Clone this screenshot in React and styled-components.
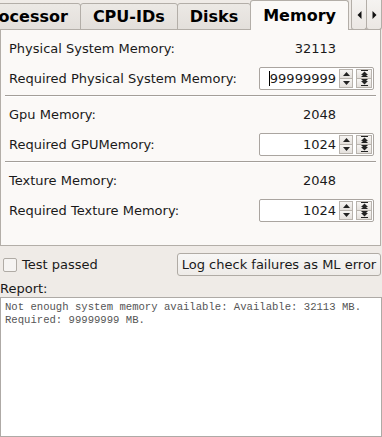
import React from "react";
import styled, { createGlobalStyle } from "styled-components";

const GlobalStyle = createGlobalStyle`
  html, body {
    margin: 0;
    padding: 0;
    background: #efebe7;
  }
  body {
    font-family: "DejaVu Sans", "Liberation Sans", sans-serif;
    font-size: 13px;
    color: #1a1a1a;
  }
`;

const Window = styled.div`
  width: 382px;
  height: 437px;
  display: flex;
  flex-direction: column;
  overflow: hidden;
  background: #efebe7;
`;

const TabBar = styled.div`
  display: flex;
  height: 30px;
  position: relative;
  z-index: 1;
`;

const TabStrip = styled.div`
  flex: 1;
  overflow: hidden;
  display: flex;
`;

const TabList = styled.div`
  display: flex;
  align-items: flex-start;
  margin-left: ${(p) => p.offset}px;
`;

const Tab = styled.div`
  flex: none;
  box-sizing: border-box;
  height: ${(p) => (p.active ? 30 : 27)}px;
  margin-top: ${(p) => (p.active ? 0 : 3)}px;
  margin-left: -1px;
  padding: 0 12px;
  display: flex;
  align-items: center;
  justify-content: center;
  font-size: 16px;
  font-weight: bold;
  color: #000;
  border: 1px solid #b3aea8;
  border-bottom: ${(p) => (p.active ? "none" : "1px solid #b3aea8")};
  border-radius: 3px 3px 0 0;
  background: ${(p) =>
    p.active ? "#fbf9f7" : "linear-gradient(#ece9e5, #e3dfdb)"};
  position: relative;
  z-index: ${(p) => (p.active ? 2 : 1)};
  white-space: nowrap;
`;

const ScrollButtons = styled.div`
  display: flex;
  flex: none;
`;

const ScrollButton = styled.div`
  box-sizing: border-box;
  width: 16px;
  height: 30px;
  display: flex;
  align-items: center;
  justify-content: center;
  border: 1px solid #b3aea8;
  border-top: none;
  border-radius: 0 0 3px 3px;
  background: linear-gradient(#f5f3f1, #ebe7e3);
  margin-left: ${(p) => (p.first ? 0 : -1)}px;
`;

const Pane = styled.div`
  box-sizing: border-box;
  width: 381px;
  margin-top: -1px;
  border: 1px solid #b3aea8;
  background: #fbf9f7;
  padding: 6px 4px 23px 4px;
  display: flex;
  flex-direction: column;
`;

const Group = styled.div`
  display: grid;
  grid-template-columns: 1fr 115px;
  grid-auto-rows: 24px;
  row-gap: 6px;
  padding: 0 2px 0 4px;
`;

const Label = styled.div`
  display: flex;
  align-items: center;
  white-space: nowrap;
`;

const Value = styled.div`
  display: flex;
  align-items: center;
  justify-content: flex-end;
  padding-right: 38px;
`;

const Separator = styled.div`
  margin: ${(p) => p.margin};
  border-top: 1px solid #a39e99;
  border-bottom: 1px solid #ffffff;
`;

const SpinBox = styled.div`
  box-sizing: border-box;
  height: 23px;
  align-self: center;
  display: flex;
  align-items: center;
  background: #fff;
  border: 1px solid #aaa5a0;
  border-radius: 2px;
  padding-right: 1px;
`;

const SpinText = styled.div`
  flex: 1;
  display: flex;
  justify-content: flex-end;
  align-items: center;
  padding-right: 3px;
`;

const Cursor = styled.span`
  display: inline-block;
  width: 1px;
  height: 15px;
  background: #000;
`;

const SpinButtons = styled.div`
  display: flex;
  flex-direction: column;
  box-sizing: border-box;
  width: ${(p) => p.w}px;
  height: 19px;
  margin-left: ${(p) => p.gap}px;
  border: 1px solid #b8b3ad;
  background: #f3f1ee;
`;

const SpinHalf = styled.div`
  flex: 1;
  display: flex;
  align-items: center;
  justify-content: center;
  background: linear-gradient(#f7f5f3, #e4e0dc);
  border-top: ${(p) => (p.bottom ? "1px solid #b8b3ad" : "none")};
`;

const BottomRow = styled.div`
  display: flex;
  align-items: center;
  justify-content: space-between;
  height: 23px;
  margin-top: 7px;
`;

const CheckWrap = styled.label`
  display: flex;
  align-items: center;
  padding-left: 3px;
  gap: 5px;
`;

const CheckBox = styled.span`
  box-sizing: border-box;
  width: 14px;
  height: 14px;
  border: 1px solid #b0aba5;
  border-radius: 2px;
  background: #f6f4f2;
`;

const Button = styled.div`
  box-sizing: border-box;
  height: 23px;
  width: 204px;
  margin-right: 1px;
  display: flex;
  align-items: center;
  justify-content: center;
  border: 1px solid #b0aba5;
  border-radius: 3px;
  background: linear-gradient(#f8f7f6, #eeebe8);
  white-space: nowrap;
`;

const ReportLabel = styled.div`
  height: 17px;
  line-height: 17px;
  margin-top: 4px;
`;

const Report = styled.div`
  flex: 1;
  box-sizing: border-box;
  width: 382px;
  border: 1px solid #aeaaa6;
  background: #fff;
  padding: 3px 4px;
  font-family: "Liberation Mono", "DejaVu Sans Mono", monospace;
  font-size: 10.6px;
  line-height: 12.5px;
  color: #555;
  white-space: pre;
`;

const Arrow = ({ dir }) => (
  <svg width="5" height="8" viewBox="0 0 5 8">
    {dir === "left" ? (
      <polygon points="4.5,0 0.5,4 4.5,8" fill="#111" />
    ) : (
      <polygon points="0.5,0 4.5,4 0.5,8" fill="#111" />
    )}
  </svg>
);

const Tri = ({ up, double }) => (
  <svg width="7" height={double ? 7 : 4} viewBox={double ? "0 0 7 7" : "0 0 7 4"}>
    {double ? (
      up ? (
        <g fill="#222">
          <rect x="0" y="0" width="7" height="1" />
          <polygon points="3.5,1.5 0,5 7,5" />
          <polygon points="3.5,3.5 0,7 7,7" />
        </g>
      ) : (
        <g fill="#222">
          <polygon points="0,0 7,0 3.5,3.5" />
          <polygon points="0,2 7,2 3.5,5.5" />
          <rect x="0" y="6" width="7" height="1" />
        </g>
      )
    ) : up ? (
      <polygon points="3.5,0 0,4 7,4" fill="#222" />
    ) : (
      <polygon points="0,0 7,0 3.5,4" fill="#222" />
    )}
  </svg>
);

const Spin = ({ value, focused }) => (
  <SpinBox>
    <SpinText>
      {focused && <Cursor />}
      {value}
    </SpinText>
    <SpinButtons w={14} gap={0}>
      <SpinHalf>
        <Tri up />
      </SpinHalf>
      <SpinHalf bottom>
        <Tri />
      </SpinHalf>
    </SpinButtons>
    <SpinButtons w={16} gap={3}>
      <SpinHalf>
        <Tri up double />
      </SpinHalf>
      <SpinHalf bottom>
        <Tri double />
      </SpinHalf>
    </SpinButtons>
  </SpinBox>
);

const tabs = ["Processor", "CPU-IDs", "Disks", "Memory"];

const groups = [
  { name: "Physical System Memory:", value: "32113", req: "Required Physical System Memory:", reqValue: "99999999", focused: true },
  { name: "Gpu Memory:", value: "2048", req: "Required GPUMemory:", reqValue: "1024" },
  { name: "Texture Memory:", value: "2048", req: "Required Texture Memory:", reqValue: "1024" },
];

export default function App() {
  return (
    <Window>
      <GlobalStyle />
      <TabBar>
        <TabStrip>
          <TabList offset={-33}>
            {tabs.map((t) => (
              <Tab key={t} active={t === "Memory"}>
                {t}
              </Tab>
            ))}
          </TabList>
        </TabStrip>
        <ScrollButtons>
          <ScrollButton first>
            <Arrow dir="left" />
          </ScrollButton>
          <ScrollButton>
            <Arrow dir="right" />
          </ScrollButton>
        </ScrollButtons>
      </TabBar>
      <Pane>
        {groups.map((g, i) => (
          <React.Fragment key={g.name}>
            {i > 0 && <Separator margin="5px 0 5px" />}
            <Group>
              <Label>{g.name}</Label>
              <Value>{g.value}</Value>
              <Label>{g.req}</Label>
              <Spin value={g.reqValue} focused={g.focused} />
            </Group>
          </React.Fragment>
        ))}
      </Pane>
      <BottomRow>
        <CheckWrap>
          <CheckBox />
          Test passed
        </CheckWrap>
        <Button>Log check failures as ML error</Button>
      </BottomRow>
      <ReportLabel>Report:</ReportLabel>
      <Report>
        {"Not enough system memory available: Available: 32113 MB.\nRequired: 99999999 MB."}
      </Report>
    </Window>
  );
}
